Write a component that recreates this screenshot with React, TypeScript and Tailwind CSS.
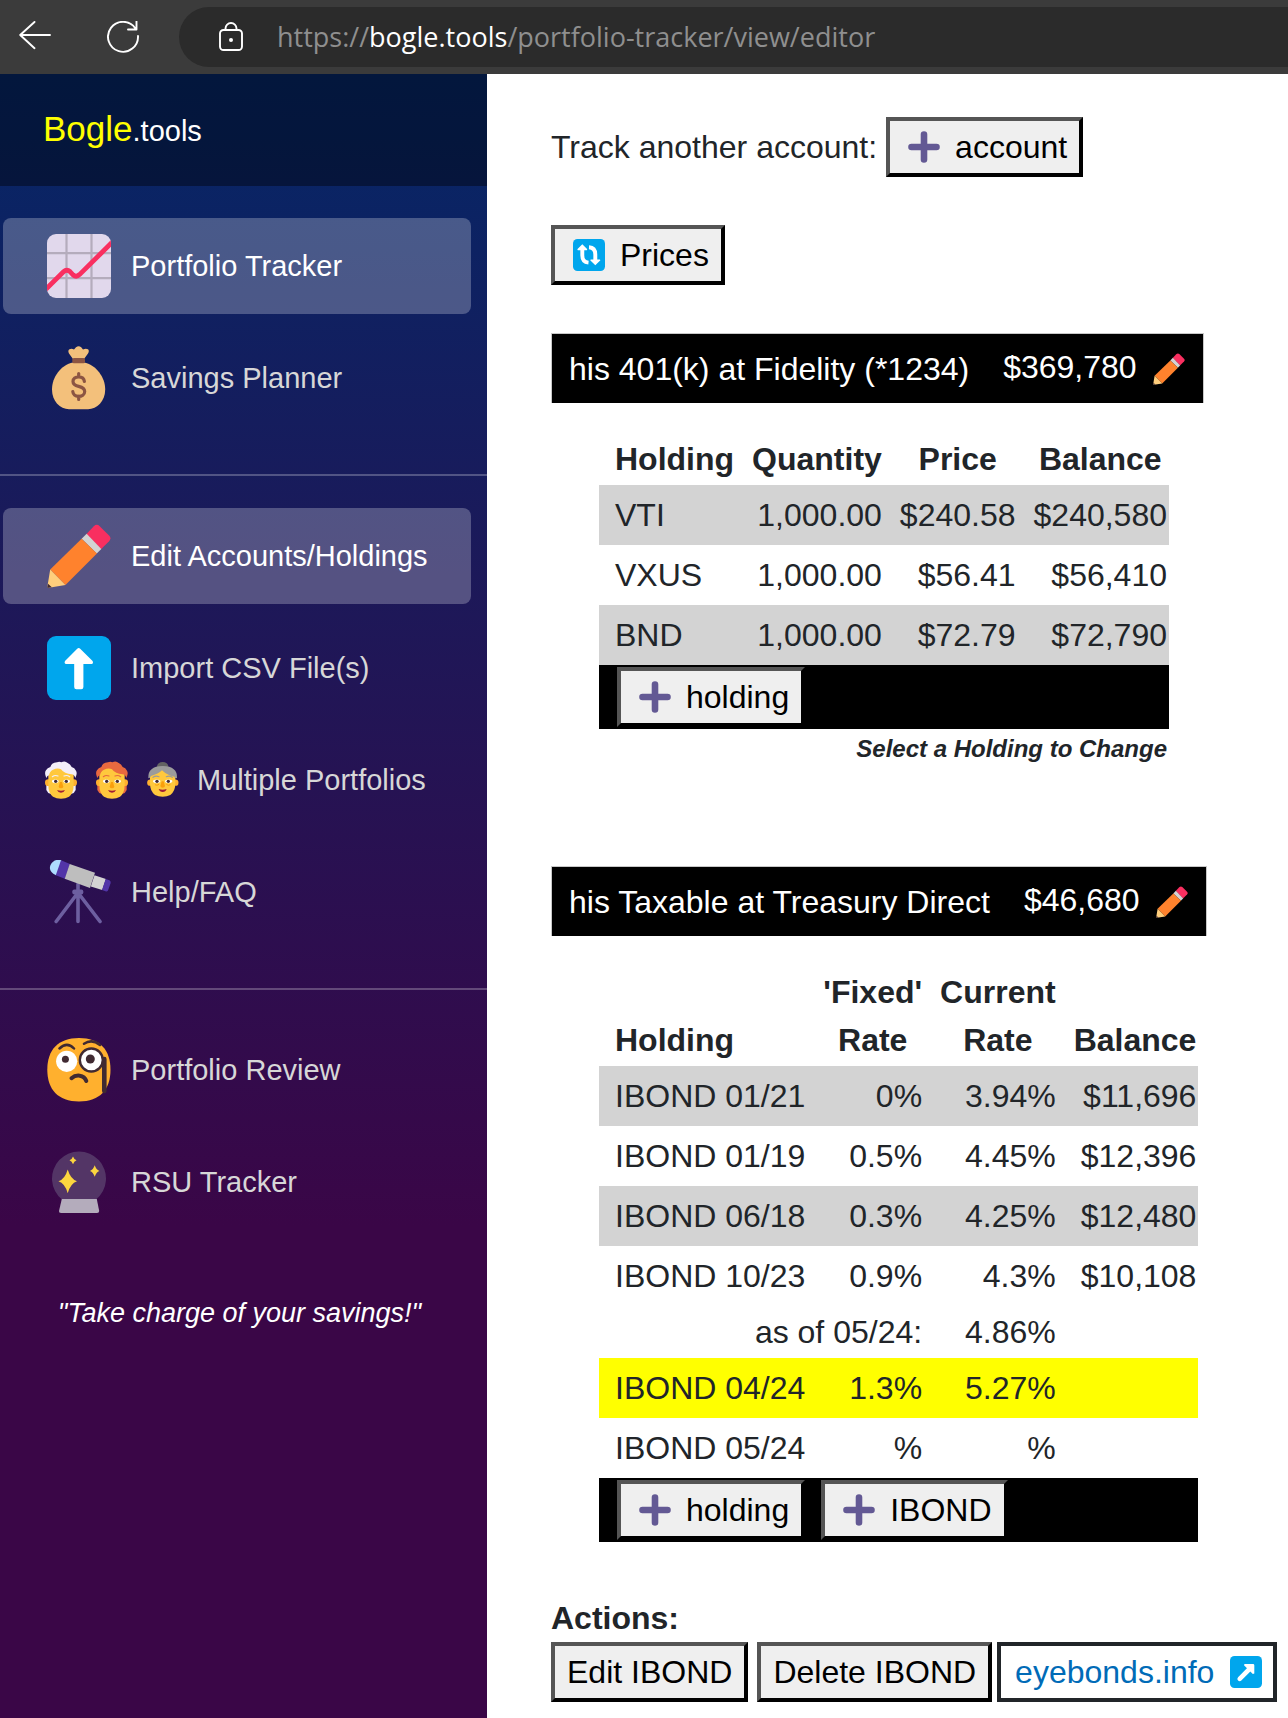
import type { ReactNode } from "react";

type IconProps = { className?: string };

function ChartIcon() {
  return (
    <svg viewBox="0 0 64 64" className="size-16 shrink-0" aria-hidden="true">
      <clipPath id="chart-clip">
        <rect width="64" height="64" rx="9" />
      </clipPath>
      <g clipPath="url(#chart-clip)">
        <rect width="64" height="64" fill="#E1D8EC" />
        <path d="M19.5 0V64M44.5 0V64M0 19.2H64M0 44.2H64" stroke="#B4ACBC" strokeWidth="2.2" />
        <path d="M-2 56 16.5 37.8Q19.8 34.6 23 37.6L26 40.8Q29.3 43.6 32.5 40.6L66 7.5" fill="none" stroke="#F92F60" strokeWidth="4.8" />
      </g>
    </svg>
  );
}

function MoneyIcon() {
  return (
    <svg viewBox="0 0 64 64" className="size-16 shrink-0" aria-hidden="true">
      <path d="M26 13 22 7.500Q20.500 4.500 22.500 3.300 24.500 2.300 27 3.500L29 1.200Q31.700-.8 34.200 1.200L36 3.500Q39 2.300 41 3.300 42.600 4.500 41 7.500L37 13Z" fill="#F3C07B" />
      <path d="M26 16.500H37C49 19 58.200 31 58.200 43.500 58.200 55 50 63.200 41 63.200H22C13 63.200 5 55 5 43.500 5 31 14 19 26 16.500Z" fill="#F3C07B" />
      <rect x="25.300" y="12" width="12.700" height="5.200" rx="1.500" fill="#8C5543" />
      <path d="M31.700 27.500V31M31.700 50V53.500M37.400 35.500C37 32.200 34.600 30.800 31.700 30.800 28.500 30.800 26 32.500 26 35.400 26 38.800 29 39.700 31.700 40.400 34.800 41.200 37.700 42.300 37.700 45.500 37.700 48.700 34.800 50.300 31.700 50.300 28.500 50.300 26.200 48.700 25.800 45.600" fill="none" stroke="#8C5543" strokeWidth="3.200" strokeLinecap="round" />
    </svg>
  );
}

function PencilIcon({ className = "" }: IconProps) {
  return (
    <svg viewBox="0 0 66 66" className={className} aria-hidden="true">
      <path d="M40.700 10.200 48.300 2.300Q51.300-.7 54.300 2.200L64 11.800Q66.800 14.600 64 17.700L55.700 26Z" fill="#F92F60" />
      <path d="M35.700 15.300 40.900 10 56 25.700 51.300 30.500Z" fill="#D3D3D3" />
      <path d="M3.300 47 35.700 15.300 51.500 30.500 19 63Z" fill="#FF822D" />
      <path d="M3.300 47 19 63 2 65.700Q.3 66 .5 64Z" fill="#FFCE7C" />
      <path d="M1 61.500 5 65.200 1.500 65.800Q.3 66 .5 64.500Z" fill="#402A32" />
    </svg>
  );
}

function UploadIcon() {
  return (
    <svg viewBox="0 0 64 64" className="size-16 shrink-0" aria-hidden="true">
      <rect width="64" height="64" rx="9" fill="#00A6ED" />
      <path d="M30.200 12.800Q31.700 11.400 33.200 12.800L45.600 25Q46.800 27.600 44.500 28H36.400V51Q36.400 53.200 34.200 53.200H29.400Q27.200 53.200 27.200 51V28H19.200Q16.800 27.600 18 25Z" fill="#FFF" />
    </svg>
  );
}

function PersonIcon({ hair }: { hair: string }) {
  return (
    <svg viewBox="0 0 96 112" className="h-[38px] w-8" aria-hidden="true">
      <path d="M4 66H92V86Q88 96 80 97H16Q8 96 4 86Z" fill={hair} />
      <circle cx="10" cy="64" r="10" fill="#FFB02E" />
      <circle cx="86" cy="64" r="10" fill="#FFB02E" />
      <path d="M10 34Q14 12 48 12 82 12 86 34V70Q86 95 72 106 62 112 48 112 34 112 24 106 10 95 10 70Z" fill="#FFC83D" />
      <path d="M4 50Q-3 34 3 27 7 19 16 17 20 4 36 3 43-1 49 3 60-3 68 5 76 8 80 17 89 19 93 28 98 36 91 50 88 40 80 39 58 38 48 24 38 19 24 25 13 31 12 42 7 42 4 50Z" fill={hair} />
      <path d="M22 46Q30 40 39 44M57 44Q66 40 74 46" fill="none" stroke={hair} strokeWidth="3.500" strokeLinecap="round" />
      <ellipse cx="31" cy="60" rx="10" ry="5.500" fill="#FFF" />
      <ellipse cx="65" cy="60" rx="10" ry="5.500" fill="#FFF" />
      <circle cx="32" cy="60" r="5" fill="#402A32" />
      <circle cx="64" cy="60" r="5" fill="#402A32" />
      <path d="M45 62H51L55 76Q54 81 48 81 42 81 41 76Z" fill="#FA9F0C" />
      <path d="M36 86Q48 90 60 86 57 94 48 94 39 94 36 86Z" fill="#A01C35" />
    </svg>
  );
}

function ElderIcon() {
  return (
    <svg viewBox="0 0 96 112" className="h-[38px] w-8" aria-hidden="true">
      <ellipse cx="47" cy="15" rx="17" ry="13" fill="#636363" />
      <circle cx="10" cy="64" r="9.500" fill="#FFB02E" />
      <circle cx="85" cy="64" r="9.500" fill="#FFB02E" />
      <path d="M9 40Q12 20 47 20 82 20 85 40V66Q85 90 70 101 60 106 47 106 34 106 24 101 9 90 9 66Z" fill="#FFC83D" />
      <path d="M4 50Q2 15 47 14 92 15 90 50 84 52 82 46 60 42 45 27 34 38 12 44 9 52 4 50Z" fill="#9B9B9B" />
      <path d="M18 48Q26 42 36 46M58 46Q68 42 76 48" fill="none" stroke="#9B9B9B" strokeWidth="3.500" strokeLinecap="round" />
      <ellipse cx="29" cy="60" rx="11" ry="5.500" fill="#FFF" />
      <ellipse cx="65" cy="60" rx="11" ry="5.500" fill="#FFF" />
      <circle cx="30" cy="60" r="5" fill="#402A32" />
      <circle cx="64" cy="60" r="5" fill="#402A32" />
      <path d="M24 70Q30 74 36 69M58 69Q64 74 70 70" fill="none" stroke="#FA9F0C" strokeWidth="3" />
      <path d="M44 60H50L54 74Q53 79 47 79 41 79 40 74Z" fill="#FA9F0C" />
      <path d="M35 83Q47 87 59 83 56 92 47 92 38 92 35 83Z" fill="#A01C35" />
    </svg>
  );
}

function TelescopeIcon() {
  return (
    <svg viewBox="0 0 64 64" className="size-16 shrink-0" aria-hidden="true">
      <path d="M31 24V61.500M30 34 9.200 61.500M32 34 53 61.500" stroke="#6D5FA0" strokeWidth="3.600" strokeLinecap="round" />
      <rect x="25.300" y="29.500" width="11" height="5" rx="2" fill="#6D5FA0" />
      <path d="M14.300.2Q7-1.600 3.500 5 1 12 9 15.200L13 9Z" fill="#AEDDFF" />
      <path d="M14 .2 23 4 17.800 18.800 8.800 15.200Z" fill="#5235A8" />
      <path d="M22.700 4 48 12.700 43 28 17.700 18.700Z" fill="#BEBEBE" />
      <path d="M47.500 15.300 58.900 19 55.200 30 43.800 26.500Z" fill="#D3D3D3" />
      <path d="M58.700 19 62.500 20.300Q64 21.500 63.700 23L61 30.500Q60 32 58.500 31.300L55 30Z" fill="#5235A8" />
    </svg>
  );
}

function MonocleIcon() {
  return (
    <svg viewBox="0 0 64 64" className="size-16 shrink-0" aria-hidden="true">
      <path d="M32 0C53 0 63.500 12 63.500 31.700S53 63.400 32 63.400.3 51.400.3 31.700 11 0 32 0Z" fill="#FFB02E" />
      <path d="M12.500 10.500Q20 3.300 27 10.500M37 5.700Q45 .5 53 7" fill="none" stroke="#402A32" strokeWidth="2.500" strokeLinecap="round" />
      <circle cx="19.700" cy="23.300" r="10.600" fill="#FFF" />
      <circle cx="18.400" cy="21.300" r="3.500" fill="#402A32" />
      <path d="M57.300 21V53" stroke="#402A32" strokeWidth="4.600" strokeLinecap="round" />
      <circle cx="44.300" cy="22" r="11.500" fill="#FFF" stroke="#402A32" strokeWidth="2.400" />
      <circle cx="43.300" cy="21" r="4.500" fill="#402A32" />
      <path d="M24.500 40.200C29 36.300 37 36.500 39.300 43" fill="none" stroke="#402A32" strokeWidth="4" strokeLinecap="round" />
    </svg>
  );
}

function CrystalBallIcon() {
  return (
    <svg viewBox="0 0 64 64" className="size-16 shrink-0" aria-hidden="true">
      <path d="M15 49.500A27 27 0 1 1 49 49.500Z" fill="#533566" />
      <path d="M14.800 49H49.800L52.200 61Q52.200 63 50 63H14Q11.800 63 12 61Z" fill="#B4ACBC" />
      <path d="M20.700 19.500Q23.500 29 30 31.300 23.500 33.500 20.700 43.200 18 33.500 11.500 31.300 18 29 20.700 19.500ZM26 6.500Q27 9.300 29.500 10.300 27 11.300 26 14.200 25 11.300 22.500 10.300 25 9.300 26 6.500ZM47.700 15.300Q49.200 19.700 52.400 21 49.200 22.300 47.700 26.700 46.200 22.300 43 21 46.200 19.700 47.700 15.300Z" fill="#FCD53F" />
    </svg>
  );
}

function PlusIcon() {
  return (
    <svg viewBox="0 0 32 32" className="mr-[15px] ml-1.5 size-8" aria-hidden="true">
      <path d="M16 3.500V28.500M3.500 16H28.500" stroke="#635994" strokeWidth="6.600" strokeLinecap="round" />
    </svg>
  );
}

function RefreshBadge() {
  return (
    <svg viewBox="0 0 32 32" className="mr-[15px] ml-1.5 size-8" aria-hidden="true">
      <rect width="32" height="32" rx="4.500" fill="#00A6ED" />
      <path d="M9.300 9.500V16.500Q9.300 23 15.500 23.600M16 8.200Q22.300 8.500 22.300 15.500V22" fill="none" stroke="#FFF" strokeWidth="3.900" />
      <path d="M9.300 5.300 14.300 10.300 13.800 11.200H4.800L4.300 10.300ZM22.300 26.300 17.200 21.300 17.700 20.400H26.900L27.400 21.300Z" fill="#FFF" />
    </svg>
  );
}

function ExternalBadge() {
  return (
    <svg viewBox="0 0 32 32" className="size-8" aria-hidden="true">
      <rect width="32" height="32" rx="4.500" fill="#00A6ED" />
      <path d="M9.700 22.800 20 12.500" stroke="#FFF" strokeWidth="4.600" strokeLinecap="round" />
      <path d="M14.500 8H23Q24.300 8 24.300 9.300V17.500L22.800 18 14 9.200Z" fill="#FFF" />
    </svg>
  );
}

function BrowserBar() {
  return (
    <header className="flex h-[74px] items-center bg-[#3b3b3b] pl-[19px]">
      <button type="button" aria-label="Back" className="text-white">
        <svg viewBox="0 0 32 32" className="size-8" fill="none" stroke="currentColor" strokeWidth="1.900" strokeLinecap="round" strokeLinejoin="round">
          <path d="M15.500 1 1.200 14 15.500 27.200M1.200 14H31" />
        </svg>
      </button>
      <button type="button" aria-label="Refresh" className="ml-14 text-white">
        <svg viewBox="0 0 32 32" className="size-8" fill="none" stroke="currentColor" strokeWidth="1.900" strokeLinecap="round" strokeLinejoin="round">
          <path d="M31 15A15 15 0 1 1 28.500 7.500M29.500 .5V8.500H21" />
        </svg>
      </button>
      <div className="ml-10 flex h-[60px] flex-1 items-center rounded-l-full bg-[#2b2b2b] pl-10">
        <svg viewBox="0 0 24 30" className="h-[30px] w-6" fill="none" stroke="#fff" strokeWidth="1.900" aria-hidden="true">
          <rect x="1" y="8" width="22" height="20" rx="3.500" />
          <path d="M6.500 8V6.500A5.500 5.500 0 0 1 17.500 6.500V8" />
          <circle cx="12" cy="18" r="2" fill="#fff" stroke="none" />
        </svg>
        <p className="ml-[34px] font-['Open_Sans',sans-serif] text-[27px] text-[#8f8f8f]">
          https://<span className="text-white">bogle.tools</span>/portfolio-tracker/view/editor
        </p>
      </div>
    </header>
  );
}

function NavItem({ icon, label, active = false }: { icon: ReactNode; label: string; active?: boolean }) {
  return (
    <li>
      <a
        href="#"
        aria-current={active ? "page" : undefined}
        className={
          active
            ? "flex h-24 items-center gap-5 rounded-lg bg-white/25 pl-11 text-white"
            : "flex h-24 items-center gap-5 rounded-lg pl-11 text-[#d7d7d7]"
        }
      >
        {icon}
        <span className="whitespace-nowrap">{label}</span>
      </a>
    </li>
  );
}

function NavGroup({ children }: { children: ReactNode }) {
  return <ul className="flex flex-col gap-4 pt-8 pr-4 pb-12 pl-[3px]">{children}</ul>;
}

function Sidebar() {
  return (
    <aside className="w-[487px] shrink-0 bg-linear-[180deg,#052767_0%,#3a0647_70%] text-[29px] leading-[46px]">
      <div className="flex h-28 items-center bg-black/40 pl-[43px]">
        <a href="#" className="text-white">
          <span className="text-[35px] text-[#ff0]">Bogle</span>.tools
        </a>
      </div>
      <nav>
        <NavGroup>
          <NavItem active icon={<ChartIcon />} label="Portfolio Tracker" />
          <NavItem icon={<MoneyIcon />} label="Savings Planner" />
        </NavGroup>
        <hr className="border-t-2 border-white/25" />
        <NavGroup>
          <NavItem active icon={<PencilIcon className="size-16 shrink-0" />} label="Edit Accounts/Holdings" />
          <NavItem icon={<UploadIcon />} label="Import CSV File(s)" />
          <NavItem
            icon={
              <span className="-mx-0.5 flex gap-[19px]">
                <PersonIcon hair="#F3EEF8" />
                <PersonIcon hair="#E8693F" />
                <ElderIcon />
              </span>
            }
            label="Multiple Portfolios"
          />
          <NavItem icon={<TelescopeIcon />} label="Help/FAQ" />
        </NavGroup>
        <hr className="border-t-2 border-white/25" />
        <NavGroup>
          <NavItem icon={<MonocleIcon />} label="Portfolio Review" />
          <NavItem icon={<CrystalBallIcon />} label="RSU Tracker" />
        </NavGroup>
      </nav>
      <p className="mt-3 pr-2 text-center text-[27px] text-white italic">"Take charge of your savings!"</p>
    </aside>
  );
}

function ToolButton({ icon, children }: { icon?: ReactNode; children: ReactNode }) {
  return (
    <button
      type="button"
      className="flex h-[60px] items-center border-4 border-t-[#555] border-r-black border-b-black border-l-[#555] bg-[#efefef] px-3 whitespace-nowrap text-black"
    >
      {icon}
      {children}
    </button>
  );
}

function AccountBar({ name, total }: { name: string; total: string }) {
  return (
    <div className="mb-[30px] flex h-[70px] w-fit items-center border border-b-0 border-[#c8c8c8] bg-black pr-[18px] pl-[17px] whitespace-nowrap text-white">
      <h2>{name}</h2>
      <span className="ml-[34px] pb-1">{total}</span>
      <button type="button" aria-label={`Edit ${name}`} className="ml-4">
        <PencilIcon className="size-8" />
      </button>
    </div>
  );
}

const th = "py-0.5 pr-0.5 pl-4 text-center align-bottom font-bold";
const name = "py-1.5 pr-0.5 pl-4 text-left";
const num = "py-1.5 pr-0.5 pl-4 text-right";

const funds = [
  { ticker: "VTI", quantity: "1,000.00", price: "$240.58", balance: "$240,580" },
  { ticker: "VXUS", quantity: "1,000.00", price: "$56.41", balance: "$56,410" },
  { ticker: "BND", quantity: "1,000.00", price: "$72.79", balance: "$72,790" },
];

const bonds = [
  { holding: "IBOND 01/21", fixed: "0%", current: "3.94%", balance: "$11,696", tone: "bg-[#d3d3d3]" },
  { holding: "IBOND 01/19", fixed: "0.5%", current: "4.45%", balance: "$12,396", tone: "" },
  { holding: "IBOND 06/18", fixed: "0.3%", current: "4.25%", balance: "$12,480", tone: "bg-[#d3d3d3]" },
  { holding: "IBOND 10/23", fixed: "0.9%", current: "4.3%", balance: "$10,108", tone: "" },
];

const newBonds = [
  { holding: "IBOND 04/24", fixed: "1.3%", current: "5.27%", balance: "", tone: "bg-[#ff0]" },
  { holding: "IBOND 05/24", fixed: "%", current: "%", balance: "", tone: "" },
];

function BondRow({ bond }: { bond: (typeof bonds)[number] }) {
  return (
    <tr className={bond.tone}>
      <td className={name}>{bond.holding}</td>
      <td className={num}>{bond.fixed}</td>
      <td className={num}>{bond.current}</td>
      <td className={num}>{bond.balance}</td>
    </tr>
  );
}

function FundTable() {
  return (
    <table className="ml-12 whitespace-nowrap">
      <thead>
        <tr>
          <th className={th}>Holding</th>
          <th className={th}>Quantity</th>
          <th className={th}>Price</th>
          <th className={th}>Balance</th>
        </tr>
      </thead>
      <tbody>
        {funds.map((fund) => (
          <tr key={fund.ticker} className="odd:bg-[#d3d3d3]">
            <td className={name}>{fund.ticker}</td>
            <td className={num}>{fund.quantity}</td>
            <td className={num}>{fund.price}</td>
            <td className={num}>{fund.balance}</td>
          </tr>
        ))}
      </tbody>
      <tfoot>
        <tr className="bg-black">
          <td colSpan={4} className="py-0.5 pl-[18px]">
            <ToolButton icon={<PlusIcon />}>holding</ToolButton>
          </td>
        </tr>
        <tr>
          <td colSpan={4} className="pt-0.5 pr-0.5 text-right text-2xl leading-9 font-bold italic">
            Select a Holding to Change
          </td>
        </tr>
      </tfoot>
    </table>
  );
}

function BondTable() {
  return (
    <table className="ml-12 whitespace-nowrap">
      <thead>
        <tr>
          <th className="py-0.5 pr-0.5 pl-4 text-left align-bottom font-bold">Holding</th>
          <th className={th}>
            'Fixed'
            <br />
            Rate
          </th>
          <th className={th}>
            Current
            <br />
            Rate
          </th>
          <th className={th}>Balance</th>
        </tr>
      </thead>
      <tbody>
        {bonds.map((bond) => (
          <BondRow key={bond.holding} bond={bond} />
        ))}
        <tr>
          <td colSpan={2} className="py-0.5 pr-0.5 text-right">
            as of 05/24:
          </td>
          <td className="py-0.5 pr-0.5 text-right">4.86%</td>
          <td />
        </tr>
        {newBonds.map((bond) => (
          <BondRow key={bond.holding} bond={bond} />
        ))}
      </tbody>
      <tfoot>
        <tr className="bg-black">
          <td colSpan={4} className="py-0.5 pl-[18px]">
            <div className="flex gap-4">
              <ToolButton icon={<PlusIcon />}>holding</ToolButton>
              <ToolButton icon={<PlusIcon />}>IBOND</ToolButton>
            </div>
          </td>
        </tr>
      </tfoot>
    </table>
  );
}

export default function App() {
  return (
    <div className="flex min-h-screen flex-col bg-white font-['Liberation_Sans',Arial,sans-serif]">
      <BrowserBar />
      <div className="flex flex-1">
        <Sidebar />
        <main className="min-w-0 flex-1 pt-[43px] pb-4 pl-16 text-[32px] leading-[48px] text-[#212529]">
          <div className="mb-12 flex items-center gap-[9px]">
            <span className="whitespace-nowrap">Track another account:</span>
            <ToolButton icon={<PlusIcon />}>account</ToolButton>
          </div>
          <div className="mb-12">
            <ToolButton icon={<RefreshBadge />}>Prices</ToolButton>
          </div>
          <section className="mb-[99px]">
            <AccountBar name="his 401(k) at Fidelity (*1234)" total="$369,780" />
            <FundTable />
          </section>
          <section className="mb-[52px]">
            <AccountBar name="his Taxable at Treasury Direct" total="$46,680" />
            <BondTable />
          </section>
          <section>
            <h3 className="font-bold">Actions:</h3>
            <div className="flex">
              <ToolButton>Edit IBOND</ToolButton>
              <div className="mr-[5px] ml-[9px]">
                <ToolButton>Delete IBOND</ToolButton>
              </div>
              <a href="#" className="flex h-[60px] items-center gap-4 border-4 border-[#212529] pr-[11px] pl-3.5 text-[#006bb7]">
                eyebonds.info
                <ExternalBadge />
              </a>
            </div>
          </section>
        </main>
      </div>
    </div>
  );
}
